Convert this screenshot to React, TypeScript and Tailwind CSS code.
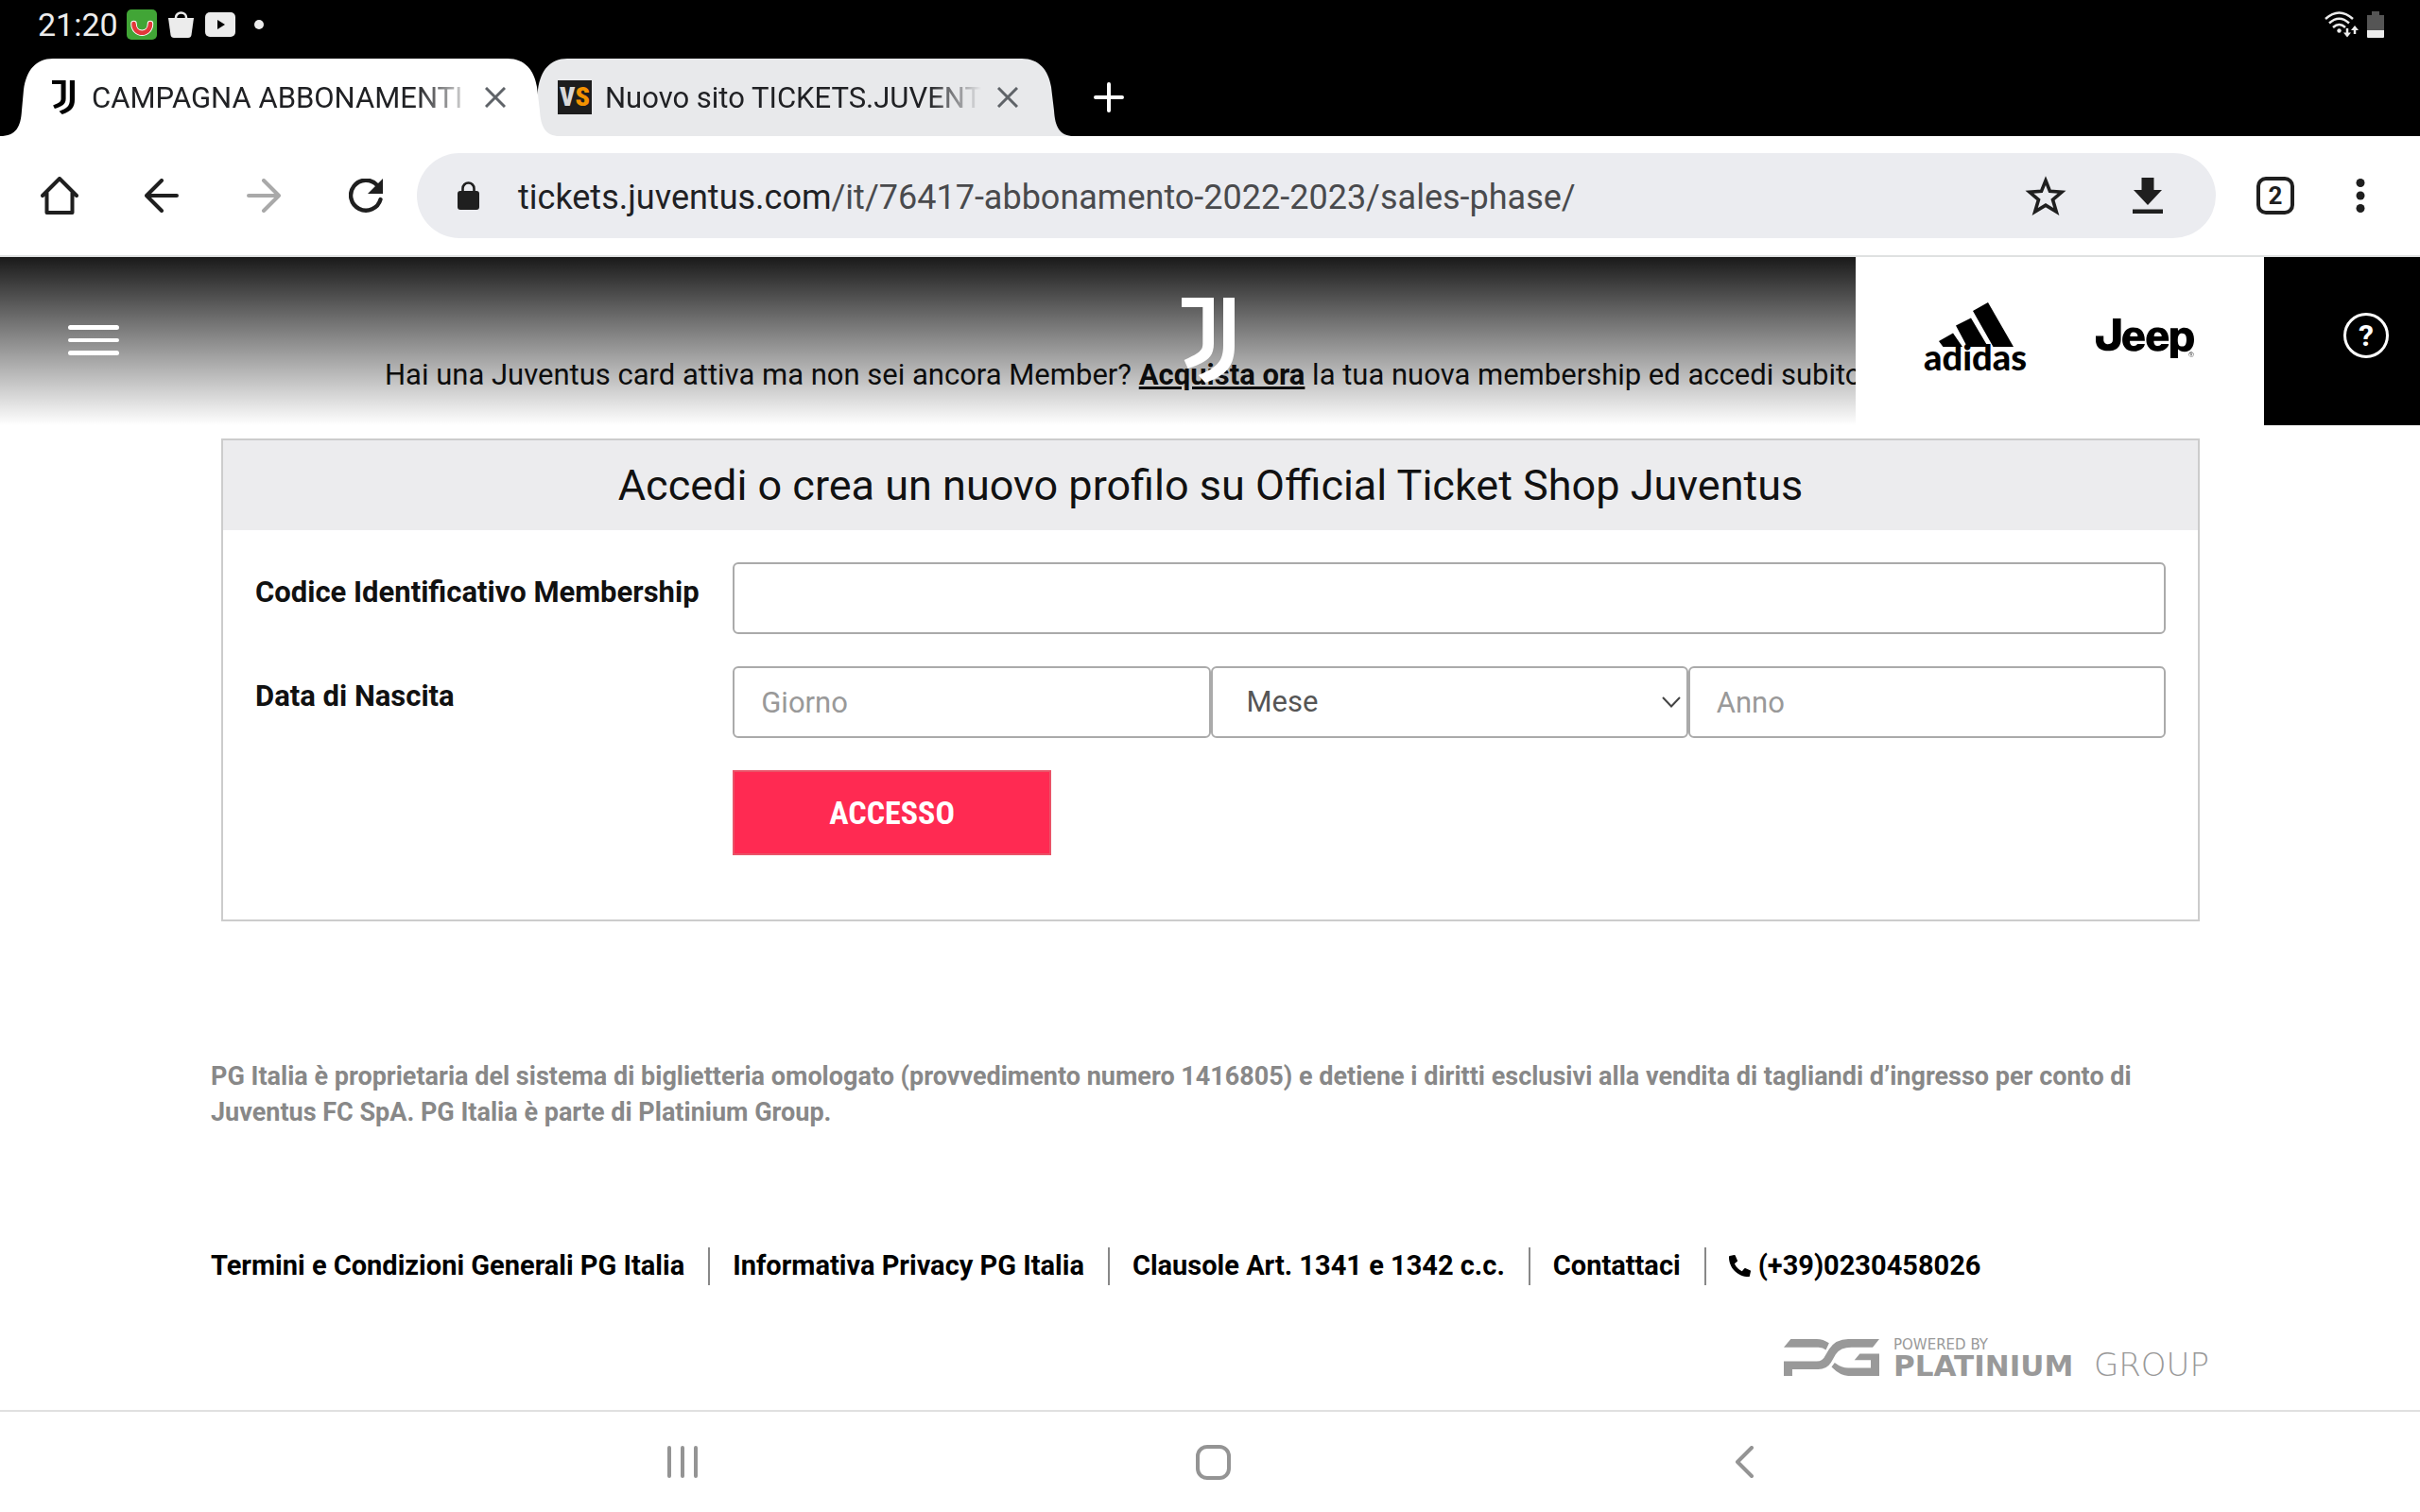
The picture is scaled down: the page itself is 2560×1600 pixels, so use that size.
import React from "react";
import { SiJeep } from "react-icons/si";
import { FaPhoneAlt } from "react-icons/fa";

function JuventusMark({ className }: { className: string }) {
  return (
    <svg viewBox="0 0 168 270" preserveAspectRatio="none" className={className} fill="currentColor" aria-hidden="true">
      <path d="M0 0H102V146C102 196 70 206 20 225L8 198C52 178 67 170 67 146V30H0Z" />
      <path d="M132 0H168V152C168 214 144 246 75 270L53 246C110 222 132 204 132 152Z" />
    </svg>
  );
}

function TabShape({ className }: { className: string }) {
  return (
    <svg viewBox="0 0 592 82" className={className} fill="currentColor" aria-hidden="true">
      <path d="M0 82C17 82 22 72 23 55L25 33C28 12 38 0 56 0H537C555 0 565 12 568 30L571 55C572 72 577 82 592 82Z" />
    </svg>
  );
}

function CloseIcon() {
  return (
    <svg viewBox="0 0 22 22" className="size-[22px]" stroke="currentColor" strokeWidth="3" aria-hidden="true">
      <path d="M1 1L21 21M21 1L1 21" />
    </svg>
  );
}

function StatusBar() {
  return (
    <div className="flex h-[62px] items-start justify-between bg-black pl-10 pr-[38px] text-[#ececec]">
      <div className="flex h-[52px] items-center">
        <span className="w-[94px] text-[34px] leading-[54px]">21:20</span>
        <svg viewBox="0 0 32 32" className="size-8" aria-hidden="true">
          <rect width="32" height="32" rx="5" fill="#41a536" />
          <path d="M7.500 15C7.500 28 25 28 25 15" fill="none" stroke="#fff" strokeWidth="6.500" strokeLinecap="round" />
          <path d="M7.500 15C7.500 28 25 28 25 15" fill="none" stroke="#e2383a" strokeWidth="4.500" strokeLinecap="round" />
        </svg>
        <svg viewBox="0 0 27 28" className="ml-3 h-7 w-[27px]" aria-hidden="true">
          <path d="M8 9V6.500a5.500 5 0 0 1 11 0V9" fill="none" stroke="currentColor" strokeWidth="2.500" />
          <path d="M0 7H27L24.500 25Q24 28 21 28H6Q3 28 2.500 25Z" fill="currentColor" />
        </svg>
        <svg viewBox="0 0 32 26" className="ml-3 h-[26px] w-8" aria-hidden="true">
          <rect width="32" height="26" rx="5" fill="currentColor" />
          <path d="M13 8V18L21 13Z" fill="#000" />
        </svg>
        <span className="ml-5 size-2.5 rounded-full bg-current" />
      </div>
      <div className="flex h-[52px] items-center gap-[9px]">
        <svg viewBox="0 0 36 28" className="h-7 w-9" fill="none" stroke="currentColor" strokeWidth="2.500" aria-hidden="true">
          <path d="M1 8Q15.500 -5 30 8M5 12.500Q15.500 3 26 12.500M9 17Q15.500 11 22 17" />
          <circle cx="15.500" cy="20.500" r="2.200" fill="currentColor" stroke="none" />
          <path d="M24 18V25M32 24V18" />
          <path d="M20 22.500H28L24 27.500ZM28 20H36L32 15Z" fill="currentColor" stroke="none" />
        </svg>
        <svg viewBox="0 0 18 28" className="h-7 w-[18px]" aria-hidden="true">
          <path d="M5 0H13V4H18V20H0V4H5Z" fill="#555" />
          <path d="M0 20H18V27Q18 28 17 28H1Q0 28 0 27Z" fill="currentColor" />
        </svg>
      </div>
    </div>
  );
}

function TabStrip() {
  return (
    <div className="flex h-[82px] bg-black text-[31px] text-[#202124]">
      <div className="relative z-10 flex w-[592px] items-center pl-[55px]">
        <TabShape className="absolute inset-0 h-full w-full text-white" />
        <JuventusMark className="relative h-9 w-6 text-black" />
        <span className="relative ml-[18px] w-[390px] whitespace-nowrap pt-0.5 leading-10 [mask-image:linear-gradient(to_right,black_88%,transparent_104%)]">
          CAMPAGNA ABBONAMENTI
        </span>
        <button type="button" aria-label="Chiudi scheda" className="relative ml-[26px] text-[#5f6368]">
          <CloseIcon />
        </button>
      </div>
      <div className="relative -ml-12 flex w-[592px] items-center pl-[46px]">
        <TabShape className="absolute inset-0 h-full w-full text-[#e8e9eb]" />
        <span className="relative flex size-9 items-center justify-center bg-[#1d1d1d] font-['Roboto_Condensed',Roboto,sans-serif] text-[28px] font-black leading-9 text-[#d9d9d9]">
          V<span className="text-[#f39200]">S</span>
        </span>
        <span className="relative ml-[14px] w-[398px] whitespace-nowrap pt-0.5 leading-10 [mask-image:linear-gradient(to_right,black_86%,transparent)]">
          Nuovo sito TICKETS.JUVENT
        </span>
        <button type="button" aria-label="Chiudi scheda" className="relative ml-[17px] text-[#5f6368]">
          <CloseIcon />
        </button>
      </div>
      <button type="button" aria-label="Nuova scheda" className="ml-[21px] flex items-center text-white">
        <svg viewBox="0 0 32 32" className="size-8" stroke="currentColor" strokeWidth="4" strokeLinecap="round" aria-hidden="true">
          <path d="M16 2V30M2 16H30" />
        </svg>
      </button>
    </div>
  );
}

function Toolbar() {
  return (
    <div className="flex h-32 items-center border-b-2 border-[#dfe1e1] bg-white pl-[43px] pr-[58px] text-[#1f1f1f]">
      <button type="button" aria-label="Home">
        <svg viewBox="0 0 40 40" className="size-10" fill="none" stroke="currentColor" strokeWidth="4" strokeLinejoin="round" strokeLinecap="round" aria-hidden="true">
          <path d="M2 20L20 2L38 20M6.500 17V38H33.500V17" />
        </svg>
      </button>
      <button type="button" aria-label="Indietro" className="ml-[70px]">
        <svg viewBox="0 0 36 36" className="size-9" fill="none" stroke="currentColor" strokeWidth="4" strokeLinecap="round" strokeLinejoin="round" aria-hidden="true">
          <path d="M34 18H2M18 2L2 18L18 34" />
        </svg>
      </button>
      <button type="button" aria-label="Avanti" className="ml-[72px] text-[#a9a9a9]">
        <svg viewBox="0 0 36 36" className="size-9" fill="none" stroke="currentColor" strokeWidth="4" strokeLinecap="round" strokeLinejoin="round" aria-hidden="true">
          <path d="M2 18H34M18 2L34 18L18 34" />
        </svg>
      </button>
      <button type="button" aria-label="Ricarica" className="ml-[72px]">
        <svg viewBox="0 0 36 36" className="size-9" fill="none" aria-hidden="true">
          <path d="M30 7A16 16 0 1 0 33.500 22" stroke="currentColor" strokeWidth="4.400" strokeLinecap="round" />
          <path d="M36 0V16H20Z" fill="currentColor" />
        </svg>
      </button>
      <div className="ml-9 flex h-[90px] min-w-0 flex-1 items-center rounded-full bg-[#ebecf0] pl-[43px] pr-[56px]">
        <svg viewBox="0 0 23 30" className="h-[30px] w-[23px] shrink-0" aria-hidden="true">
          <path d="M5.500 11V7.500a6 6 0 0 1 12 0V11" fill="none" stroke="currentColor" strokeWidth="2.600" />
          <rect y="10" width="23" height="20" rx="3" fill="currentColor" />
        </svg>
        <div className="ml-[41px] min-w-0 flex-1 whitespace-nowrap pt-1 text-[36px] text-[#494a4d]">
          <span className="text-[#202124]">tickets.juventus.com</span>/it/76417-abbonamento-2022-2023/sales-phase/
        </div>
        <button type="button" aria-label="Aggiungi ai preferiti">
          <svg viewBox="0 0 44 42" className="h-[42px] w-11" fill="none" stroke="currentColor" strokeWidth="3.600" aria-hidden="true">
            <path d="M22 5L26.500 16.300L39 17.300L29.500 25.300L33.300 38L22 31.200L10.700 38L14.500 25.300L5 17.300L17.500 16.300Z" />
          </svg>
        </button>
        <button type="button" aria-label="Scarica" className="ml-[70px]">
          <svg viewBox="0 0 32 38" className="h-[38px] w-8" fill="currentColor" aria-hidden="true">
            <path d="M9.500 0H22.500V13H31L16 29L1 13H9.500ZM0 33.500H32V38H0Z" />
          </svg>
        </button>
      </div>
      <button type="button" aria-label="Schede aperte" className="ml-[43px] flex size-10 items-center justify-center rounded-[10px] border-4 border-current text-[26px] font-bold">
        2
      </button>
      <button type="button" aria-label="Menu del browser" className="ml-[65px]">
        <svg viewBox="0 0 10 36" className="h-9 w-2.5" fill="currentColor" aria-hidden="true">
          <circle cx="5" cy="4.500" r="4.500" />
          <circle cx="5" cy="18" r="4.500" />
          <circle cx="5" cy="31.500" r="4.500" />
        </svg>
      </button>
    </div>
  );
}

function SiteHeader() {
  return (
    <header className="absolute inset-x-0 top-0 flex h-[178px]">
      <div className="flex-1 bg-gradient-to-b from-black/90 to-black/0 pl-[72px] pt-[72px]">
        <button type="button" aria-label="Menu" className="flex flex-col gap-[9px]">
          <span className="h-[5px] w-[54px] rounded-full bg-white" />
          <span className="h-[4px] w-[54px] rounded-full bg-white" />
          <span className="h-[5px] w-[54px] rounded-full bg-white" />
        </button>
      </div>
      <a href="#home" aria-label="Juventus" className="absolute left-1/2 top-[43px] -ml-[30px]">
        <JuventusMark className="h-[90px] w-14 text-white" />
      </a>
      <div className="flex w-[432px] items-start bg-white pl-[73px] text-black">
        <a href="#adidas" className="mt-12 flex w-[107px] flex-col items-center">
          <svg viewBox="0 0 80 47" className="h-[47px] w-20" fill="currentColor" aria-hidden="true">
            <path d="M1 41L16 32.500L26 47H5.500ZM19 24.500L35 16.500L53 47H31ZM37 9L53 0L80 47H58.500Z" />
          </svg>
          <span className="-mt-2 font-[Lato,sans-serif] text-[38px] font-black leading-9">adidas</span>
        </a>
        <a href="#jeep" aria-label="Jeep" className="ml-[74px] mt-[34px]">
          <SiJeep className="size-[104px]" />
        </a>
      </div>
      <div className="w-[165px] bg-black pl-[84px] pt-[59px]">
        <button type="button" aria-label="Aiuto" className="flex size-12 items-center justify-center rounded-full border-[3px] border-white text-[32px] font-bold leading-none text-white">
          ?
        </button>
      </div>
    </header>
  );
}

const fieldClass = "h-[76px] w-full rounded-md border-2 border-[#aaa] bg-white px-7 text-[31px] text-[#555] placeholder:text-[#999]";

function LoginForm() {
  return (
    <section className="ml-[234px] mr-[233px] mt-12 border-2 border-[#ccc] text-[#111]">
      <h1 className="bg-[#ececee] text-center text-[45px] leading-[95px]">
        Accedi o crea un nuovo profilo su Official Ticket Shop Juventus
      </h1>
      <form className="grid grid-cols-4 gap-y-[34px] px-[34px] pb-[68px] pt-[34px]" onSubmit={(e) => e.preventDefault()}>
        <label htmlFor="membership" className="whitespace-nowrap pt-3 text-[31px] font-bold leading-10">
          Codice Identificativo Membership
        </label>
        <div className="col-span-3">
          <input id="membership" type="text" className={fieldClass} />
        </div>
        <label htmlFor="day" className="pt-3 text-[31px] font-bold leading-10">
          Data di Nascita
        </label>
        <input id="day" type="text" placeholder="Giorno" className={fieldClass} />
        <div className="relative">
          <select aria-label="Mese" className="h-[76px] w-full appearance-none rounded-md border-2 border-[#aaa] bg-white px-9 text-[31px] text-[#555]">
            <option>Mese</option>
          </select>
          <svg viewBox="0 0 20 12" className="pointer-events-none absolute right-2 top-8 h-3 w-5" fill="none" stroke="#444" strokeWidth="2" aria-hidden="true">
            <path d="M1 1L10 10.500L19 1" />
          </svg>
        </div>
        <input type="text" aria-label="Anno" placeholder="Anno" className={fieldClass} />
        <button type="submit" className="col-start-2 h-[90px] w-2/3 border-2 border-[#ea5368] bg-[#ff2a52] font-['Liberation_Sans_Narrow','Roboto_Condensed',Roboto,sans-serif] text-[34px] font-bold text-white">
          ACCESSO
        </button>
      </form>
    </section>
  );
}

const links = ["Termini e Condizioni Generali PG Italia", "Informativa Privacy PG Italia", "Clausole Art. 1341 e 1342 c.c.", "Contattaci"];

function SiteFooter() {
  return (
    <footer className="mt-[145px] px-[223px]">
      <p className="text-[27px] font-bold leading-[38px] text-[#888]">
        PG Italia è proprietaria del sistema di biglietteria omologato (provvedimento numero 1416805) e detiene i diritti esclusivi alla vendita di tagliandi d’ingresso per conto di Juventus FC SpA. PG Italia è parte di Platinium Group.
      </p>
      <nav className="mt-[124px] flex text-[29px] font-bold leading-[38px] text-black">
        {links.map((label) => (
          <a key={label} href="#info" className="mr-6 border-r-2 border-[#888] pb-0.5 pr-[25px]">
            {label}
          </a>
        ))}
        <a href="tel:+390230458026" className="flex items-center gap-2 pb-0.5">
          <FaPhoneAlt className="size-[23px]" />
          (+39)0230458026
        </a>
      </nav>
      <a href="#platinium" className="ml-auto mt-[57px] flex w-[450px] items-start text-[#999]">
        <svg viewBox="0 0 304 116" preserveAspectRatio="none" className="h-[39px] w-[101px]" fill="currentColor" aria-label="PG">
          <path d="M22 0H105Q125 0 144 13L134 34Q125 26 110 26H0ZM304 0L283 26H215Q180 26 165 48L150 74Q136 95 110 95H27V116H0V70H105Q124 70 132 52L144 32Q165 0 205 0ZM304 46V116H205Q180 116 152 88L162 74Q185 91 205 91H277V66H225L242 46Z" />
        </svg>
        <span className="ml-[15px] flex flex-1 flex-col font-['DejaVu_Sans',sans-serif]">
          <span className="text-[15px] leading-3">POWERED BY</span>
          <span className="flex items-baseline justify-between text-[31px] leading-[31px]">
            <span className="font-bold">PLATINIUM</span> <span className="text-[34px] font-extralight">GROUP</span>
          </span>
        </span>
      </a>
    </footer>
  );
}

function NavigationBar() {
  return (
    <div className="grid h-[108px] grid-cols-3 border-t-2 border-[#e0e0e0] bg-white pl-[441px] pr-[434px] text-[#949494]">
      <button type="button" aria-label="Recenti" className="flex items-center justify-center">
        <svg viewBox="0 0 34 34" className="size-[34px]" stroke="currentColor" strokeWidth="4" strokeLinecap="round" aria-hidden="true">
          <path d="M3 2V32M17 2V32M31 2V32" />
        </svg>
      </button>
      <button type="button" aria-label="Home" className="flex items-center justify-center">
        <span className="size-[37px] rounded-xl border-4 border-current" />
      </button>
      <button type="button" aria-label="Indietro" className="flex items-center justify-center">
        <svg viewBox="0 0 20 34" className="h-[34px] w-5" fill="none" stroke="currentColor" strokeWidth="4" strokeLinecap="round" strokeLinejoin="round" aria-hidden="true">
          <path d="M18 2L3 17L18 32" />
        </svg>
      </button>
    </div>
  );
}

export default function App() {
  return (
    <div className="flex min-h-screen flex-col bg-white font-[Roboto,sans-serif]">
      <StatusBar />
      <TabStrip />
      <Toolbar />
      <main className="relative flex-1 overflow-hidden pt-[105px]">
        <p className="whitespace-nowrap pl-[407px] text-[31px] leading-[39px] text-[#111]">
          Hai una Juventus card attiva ma non sei ancora Member?{" "}
          <a href="#membership" className="font-bold underline">
            Acquista ora
          </a>{" "}
          la tua nuova membership ed accedi subito
        </p>
        <SiteHeader />
        <LoginForm />
        <SiteFooter />
      </main>
      <NavigationBar />
    </div>
  );
}
